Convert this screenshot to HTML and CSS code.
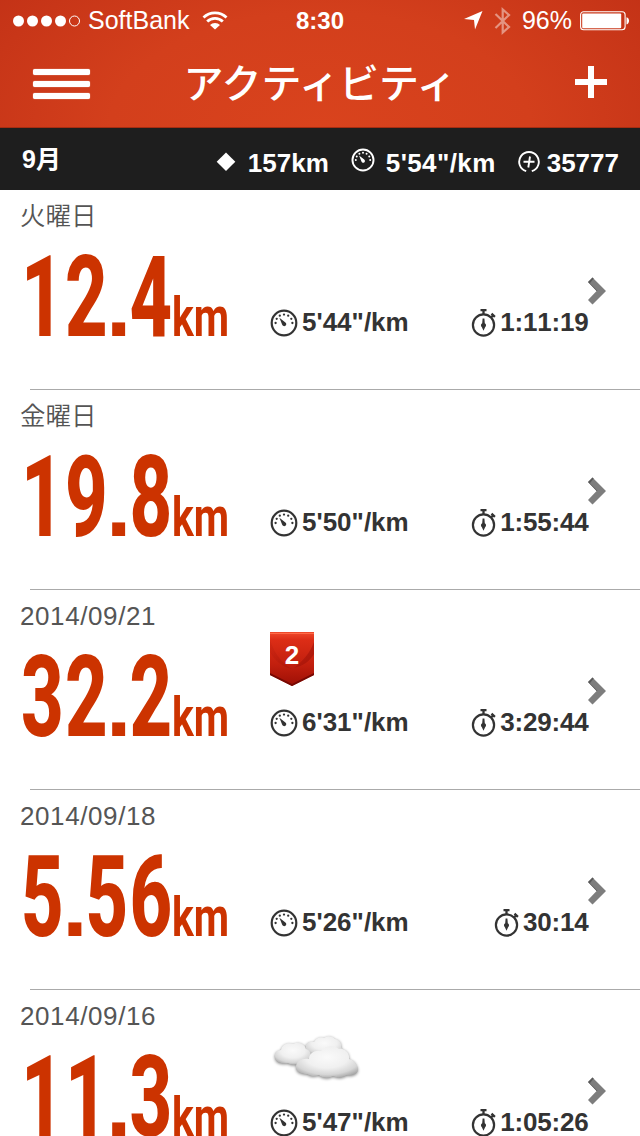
FILE: index.html
```html
<!DOCTYPE html>
<html lang="ja">
<head>
<meta charset="UTF-8">
<meta name="viewport" content="width=device-width, initial-scale=1.0">
<title>アクティビティ</title>
<link rel="stylesheet" href="styles.css">
</head>
<body>
<svg class="defs" width="0" height="0">
<symbol id="gauge" viewBox="0 0 28 28">
<circle cx="14" cy="14" r="12.3" fill="none" stroke="currentColor" stroke-width="2.2"/>
<path d="M5.600 14h.01M6.700 9.800h.01M9.800 6.700h.01M14 5.600h.01M18.200 6.700h.01M21.300 9.800h.01M22.400 14h.01" stroke="currentColor" stroke-width="2.3" stroke-linecap="round"/>
<path d="M9.400 8.800l6 4.600a2.100 2.100 0 1 1-3.200 2.400z" fill="currentColor"/>
</symbol>
<symbol id="watch" viewBox="0 0 26 30">
<circle cx="12.5" cy="17" r="10.6" fill="none" stroke="currentColor" stroke-width="2.2"/>
<path d="M12.500 6V2.500M9.500 2.200h6M20 9.500l2.400-2.400M20.500 5.600l3.400 3.200" fill="none" stroke="currentColor" stroke-width="2.300"/>
<path d="M11.600 10.500h1.800l.4 4.700a2.400 2.400 0 0 1 .3 4l-1.600 3.600-1.600-3.600a2.400 2.400 0 0 1 .3-4z" fill="currentColor"/>
</symbol>
<symbol id="chevron" viewBox="0 0 18 28">
<path d="M0 5l4.5-4.600L18 14 4.500 27.400 0 23l8.600-9z" fill="#7d7d7d"/>
<path d="M0 5l4.500-4.600 1.200 1.200-3.800 4.600L9.600 14 8.600 14z" fill="#595959"/>
</symbol>
</svg>

<header>
<div class="status">
<div class="carrier">
<svg width="68" height="12" viewBox="0 0 68 12" fill="#fff"><circle cx="5.5" cy="6" r="5.5"/><circle cx="19.5" cy="6" r="5.5"/><circle cx="33.5" cy="6" r="5.5"/><circle cx="47.5" cy="6" r="5.5"/><circle cx="61.5" cy="6" r="5" fill="none" stroke="#fff"/></svg>
<span class="name">SoftBank</span>
<svg width="26" height="19" viewBox="0 0 26 19" fill="none" stroke="#fff" stroke-width="2.8"><path d="M1.500 6.500a16.500 16.500 0 0 1 23 0M5.200 10.600a11 11 0 0 1 15.600 0"/><path d="M8 14a7 7 0 0 1 10 0l-5 4.600z" fill="#fff" stroke="none"/></svg>
</div>
<time>8:30</time>
<div class="power">
<svg width="19" height="19" viewBox="0 0 19 19" fill="#fff"><path d="M18.500 0L11 18.500 10 9 0 8z"/></svg>
<svg class="bt" width="18" height="28" viewBox="0 0 18 28" fill="none" stroke="#fff" stroke-width="2.200"><path d="M1.500 7L15 20l-6.300 5.500V2.500L15 8 1.500 21"/></svg>
<span>96%</span>
<svg width="50" height="20" viewBox="0 0 50 20"><rect x=".6" y=".8" width="44.500" height="18" rx="3" fill="none" stroke="#fff" stroke-width="1.100"/><rect x="2.200" y="2.400" width="39" height="14.800" rx="1" fill="#fff"/><path d="M46.500 6.200c3.400.8 3.400 6.400 0 7.200z" fill="#fff"/></svg>
</div>
</div>
<nav>
<div class="menu"><i></i><i></i><i></i></div>
<h1>アクティビティ</h1>
<svg width="32" height="32" viewBox="0 0 32 32" fill="#fff"><path d="M13 0h6v13h13v6H19v13h-6V19H0v-6h13z"/></svg>
</nav>
</header>

<section class="summary">
<h2>9月</h2>
<svg class="diamond" width="20" height="20" viewBox="0 0 20 20" fill="#fff"><path d="M10 .5l9.300 9.300L10 19 .7 9.800z"/></svg>
<b class="total">157km</b>
<svg class="ico" width="24" height="24"><use href="#gauge"/></svg>
<b class="avg">5'54"/km</b>
<svg class="fuel" width="22" height="22" viewBox="0 0 22 22" fill="none" stroke="#fff" stroke-width="1.900"><path d="M8.200 20.200a9.800 9.800 0 1 1 5.600 0"/><path d="M5.500 10.800h11M12 5.500l-1.700 11"/></svg>
<b>35777</b>
</section>

<ul class="runs">
<li>
<div class="date ja">火曜日</div>
<div class="dist"><span class="num">12<i>.</i>4</span><span class="unit">km</span></div>
<div class="stat pace"><svg width="28" height="28"><use href="#gauge"/></svg>5'44"/km</div>
<div class="stat time"><svg width="26" height="30"><use href="#watch"/></svg>1:11:19</div>
<svg class="go" width="18" height="28"><use href="#chevron"/></svg>
</li>
<li>
<div class="date ja">金曜日</div>
<div class="dist"><span class="num">19<i>.</i>8</span><span class="unit">km</span></div>
<div class="stat pace"><svg width="28" height="28"><use href="#gauge"/></svg>5'50"/km</div>
<div class="stat time"><svg width="26" height="30"><use href="#watch"/></svg>1:55:44</div>
<svg class="go" width="18" height="28"><use href="#chevron"/></svg>
</li>
<li>
<div class="date">2014/09/21</div>
<div class="dist"><span class="num">32<i>.</i>2</span><span class="unit">km</span></div>
<div class="badge">
<svg width="44" height="54" viewBox="0 0 44 54">
<defs>
<linearGradient id="flag" x2="0" y2="1"><stop offset="0" stop-color="#f04a2c"/><stop offset=".15" stop-color="#dc2d16"/><stop offset=".6" stop-color="#c21f0e"/><stop offset="1" stop-color="#9c0f05"/></linearGradient>
<linearGradient id="fold"><stop offset="0" stop-color="#8c0a04" stop-opacity=".1"/><stop offset="1" stop-color="#8c0a04" stop-opacity=".45"/></linearGradient>
</defs>
<path d="M0 0h44v43L22 54 0 43z" fill="url(#flag)"/>
<path d="M0 8c5 15 13 24 22 29-10-2-18-9-22-17zM44 10c-4 11-11 19-20 26 9-2 16-7 20-14z" fill="url(#fold)"/>
<path d="M0 41l22 11 22-11v2L22 54 0 43z" fill="#760903"/>
<path d="M0 1.500h44" stroke="#ff6a48" stroke-width="1"/>
</svg>
<b>2</b>
</div>
<div class="stat pace"><svg width="28" height="28"><use href="#gauge"/></svg>6'31"/km</div>
<div class="stat time"><svg width="26" height="30"><use href="#watch"/></svg>3:29:44</div>
<svg class="go" width="18" height="28"><use href="#chevron"/></svg>
</li>
<li>
<div class="date">2014/09/18</div>
<div class="dist"><span class="num">5<i>.</i>56</span><span class="unit">km</span></div>
<div class="stat pace"><svg width="28" height="28"><use href="#gauge"/></svg>5'26"/km</div>
<div class="stat time"><svg width="26" height="30"><use href="#watch"/></svg>30:14</div>
<svg class="go" width="18" height="28"><use href="#chevron"/></svg>
</li>
<li>
<div class="date">2014/09/16</div>
<div class="dist"><span class="num">11<i>.</i>3</span><span class="unit">km</span></div>
<svg class="cloud" width="92" height="50" viewBox="0 0 92 50">
<defs>
<radialGradient id="puff" cx=".5" cy=".35" r=".68"><stop offset="0" stop-color="#fafafa"/><stop offset=".5" stop-color="#f0f0f0"/><stop offset=".8" stop-color="#d6d6d6"/><stop offset="1" stop-color="#a8a8a8"/></radialGradient>
</defs>
<path d="M36 14c0-3 4-5 8-4 2-4 7-6 10-4 4-3 9-2 11 1 4 0 7 4 6 8l2 3-6 6H40c-3-3-5-6-4-10z" fill="url(#puff)"/>
<path d="M5 26c-1-5 2-8 6-8 1-6 7-8 12-6 6-3 12 0 13 5 4 1 6 5 4 9-2 4-7 3-11 4-3 4-8 3-11 1-5 1-12 0-13-5z" fill="url(#puff)"/>
<path d="M26 35c0-6 6-9 13-8 0-6 6-9 12-8 4-6 13-6 18-2 6-1 11 4 10 10 5 1 8 5 9 10 0 5-5 7-11 6-4 3-10 3-14 1-5 3-11 2-14-1-5 2-9 1-12-1-6 0-11-2-11-7z" fill="url(#puff)"/>
</svg>
<div class="stat pace"><svg width="28" height="28"><use href="#gauge"/></svg>5'47"/km</div>
<div class="stat time"><svg width="26" height="30"><use href="#watch"/></svg>1:05:26</div>
<svg class="go" width="18" height="28"><use href="#chevron"/></svg>
</li>
</ul>
</body>
</html>
```
FILE: styles.css
```css
:root {
	--red: #c30;
	--ink: #333;
}
* {
	box-sizing: border-box;
}
body {
	margin: 0;
	width: 640px;
	height: 1136px;
	overflow: hidden;
	background: #fff;
	color: var(--ink);
	font-family: "Liberation Sans", "Noto Sans CJK JP", sans-serif;
}
svg {
	display: block;
	flex: none;
}
.defs {
	position: absolute;
}

/* header */
header {
	height: 128px;
	color: #fff;
	background: radial-gradient(ellipse 420px 230px at 50% 100%, #d9431d 0%, #d33f1c 50%, #c23116 100%);
	border-bottom: 1px solid #a52d12;
}
.status {
	display: grid;
	grid-template-columns: 1fr auto 1fr;
	align-items: center;
	height: 41px;
	padding: 0 13px;
	font-size: 25px;
}
.status time {
	font-size: 24px;
	font-weight: bold;
}
.carrier, .power {
	display: flex;
	align-items: center;
}
.carrier .name {
	margin: 0 13px 0 7px;
}
.power {
	justify-content: flex-end;
	margin-right: -3px;
}
.power span {
	margin: 0 8px 0 10px;
}
.bt {
	margin-left: 11px;
	opacity: .45;
}
nav {
	display: grid;
	grid-template-columns: 1fr auto 1fr;
	align-items: center;
	height: 86px;
	padding: 0 33px;
}
nav h1 {
	margin: 0;
	font-size: 40px;
	line-height: 60px;
	font-weight: 500;
}
nav > svg {
	justify-self: end;
	margin-bottom: 4px;
}
.menu {
	display: grid;
	gap: 6px;
}
.menu i {
	width: 57px;
	height: 6px;
	border-radius: 2px;
	background: #fff;
	box-shadow: 0 0 1px #fff;
}

/* month bar */
.summary {
	display: flex;
	align-items: center;
	height: 62px;
	padding: 0 21px 0 22px;
	background: #1e1e1e;
	color: #fff;
	font-size: 26px;
}
.summary h2 {
	margin: 0 auto 0 0;
	font-size: 25px;
	line-height: 36px;
}
.summary b {
	margin-top: 8px;
}
.diamond {
	margin: 6px 12px 0 0;
}
.total {
	margin-right: 22px;
}
.ico {
	margin: 2px 11px 0 0;
}
.avg {
	margin-right: 22px;
	letter-spacing: .4px;
}
.fuel {
	margin: 5px 7px 0 0;
}

/* activity list */
.runs {
	margin: 0;
	padding: 0;
	list-style: none;
}
.runs li {
	position: relative;
	display: grid;
	grid-template-columns: 250px 1fr auto 18px;
	grid-template-rows: 42px 70px 40px;
	height: 200px;
	padding: 0 34px 0 20px;
}
.runs li::after {
	content: "";
	position: absolute;
	left: 30px;
	right: 0;
	bottom: 0;
	height: 1px;
	background: #aaa;
}
.date {
	grid-area: 1 / 1;
	padding-top: 11px;
	color: #555;
	font-size: 26px;
	line-height: 30px;
	letter-spacing: .6px;
}
.date.ja {
	font-size: 25.5px;
	font-weight: 350;
	letter-spacing: 0;
}
.dist {
	grid-area: 2 / 1 / 4 / 2;
	display: flex;
	align-items: baseline;
	margin-top: 1px;
	color: var(--red);
	font-family: Roboto, sans-serif;
	white-space: nowrap;
}
.num, .unit {
	transform-origin: 0 50%;
}
.num {
	width: 151px;
	margin-left: 1px;
	font-size: 113px;
	line-height: 130px;
	font-weight: 800;
	letter-spacing: 2.2px;
	transform: scaleX(.655);
}
/* square point */
.num i {
	display: inline-block;
	width: 18px;
	margin: 0 6.5px;
	font: bold 90px/1 "Liberation Sans", sans-serif;
	letter-spacing: 0;
	text-indent: -4px;
	transform: scaleX(1.55);
}
.unit {
	font-size: 55px;
	font-weight: 700;
	transform: scaleX(.74);
}
.badge {
	grid-area: 2 / 2;
	display: grid;
	justify-content: start;
	align-content: start;
}
.badge svg, .badge b {
	grid-area: 1 / 1;
}
.badge b {
	color: #fff;
	font-size: 26px;
	line-height: 47px;
	text-align: center;
}
.cloud {
	grid-area: 2 / 2;
	filter: drop-shadow(0 1px 1.5px #888);
}
.stat {
	grid-row: 3;
	display: flex;
	align-items: center;
	font-size: 26px;
	font-weight: bold;
}
.stat svg {
	margin-top: 2px;
}
.pace {
	grid-column: 2;
	gap: 4px;
}
.time {
	grid-column: 3;
	gap: 3.5px;
	margin-right: -.5px;
	font-kerning: none;
	letter-spacing: -.2px;
}
.go {
	grid-area: 1 / 4 / 4 / 5;
	margin-top: 87px;
}
```
